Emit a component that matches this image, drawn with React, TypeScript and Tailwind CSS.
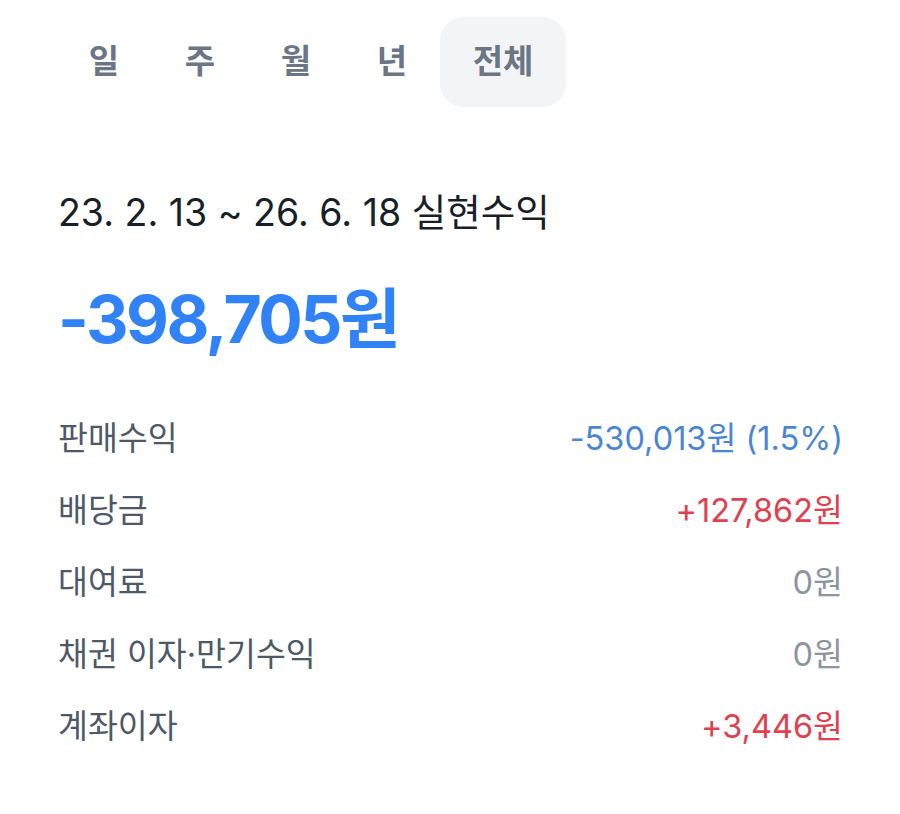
import React from "react";

const tabs = ["일", "주", "월", "년", "전체"];

const rows = [
  { label: "판매수익", value: "-530,013원 (1.5%)", color: "text-[#4a86d4]" },
  { label: "배당금", value: "+127,862원", color: "text-[#e0414f]" },
  { label: "대여료", value: "0원", color: "text-[#8b95a1]" },
  { label: "채권 이자·만기수익", value: "0원", color: "text-[#8b95a1]" },
  { label: "계좌이자", value: "+3,446원", color: "text-[#e0414f]" },
];

export default function App() {
  return (
    <div className="min-h-screen bg-white font-['Inter','Noto_Sans_CJK_KR',sans-serif]">
      <div className="flex px-[56px] pt-[17px]">
        {tabs.map((t, i) => (
          <div
            key={t}
            className={
              i === tabs.length - 1
                ? "flex h-[90px] w-[126px] items-center justify-center rounded-[24px] bg-[#f2f4f6] text-[33px] font-semibold text-[#6b7684]"
                : "flex h-[90px] w-[96px] items-center justify-center text-[33px] font-semibold text-[#6b7684]"
            }
          >
            {t}
          </div>
        ))}
      </div>

      <div className="pl-[58px] pr-[57px]">
        <div className="mt-[82px] text-[37.5px] leading-[48px] text-[#191f28]">
          23. 2. 13 ~ 26. 6. 18 실현수익
        </div>
        <div className="mt-[42px] text-[66px] font-bold leading-[80px] tracking-[-2.5px] text-[#3182f6]">
          -398,705원
        </div>

        <div className="mt-[44px] flex flex-col">
          {rows.map((r) => (
            <div key={r.label} className="flex h-[72px] items-center justify-between text-[32.5px]">
              <span className="text-[#4e5968]">{r.label}</span>
              <span className={r.color}>{r.value}</span>
            </div>
          ))}
        </div>
      </div>
    </div>
  );
}
